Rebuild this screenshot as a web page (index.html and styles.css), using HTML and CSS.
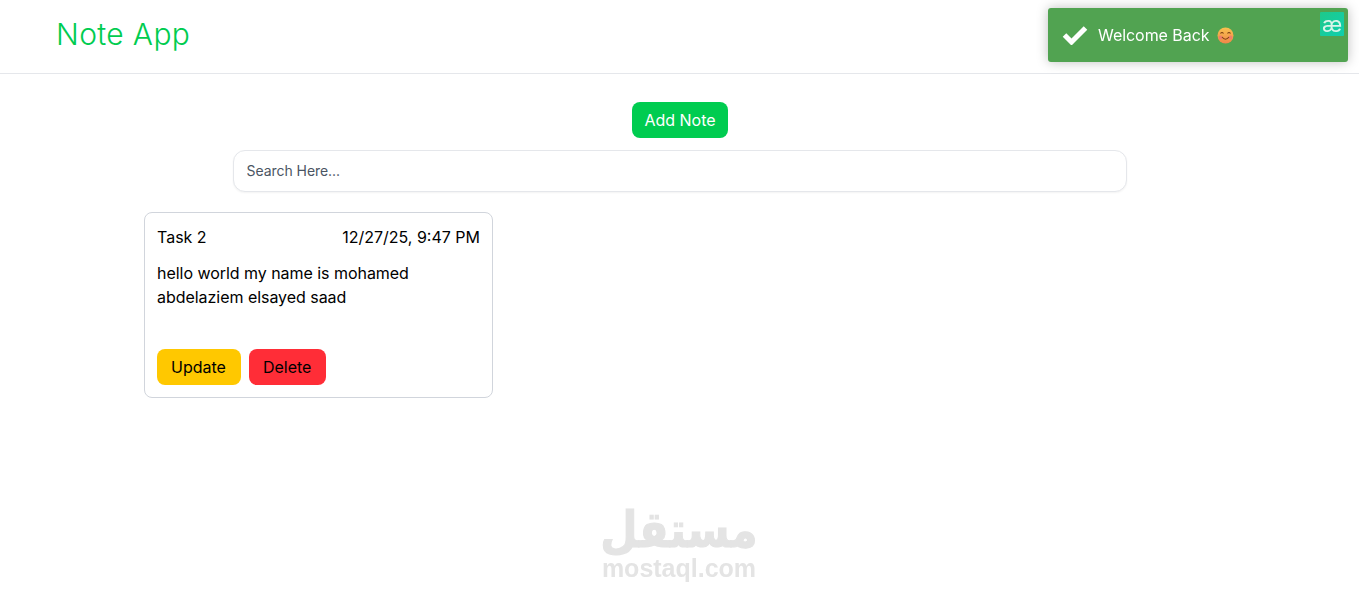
FILE: index.html
```html
<!DOCTYPE html>
<html>
  <head>
    <title>Note App</title>
    <meta name="viewport" content="width=device-width, initial-scale=1">
    <link rel="stylesheet" href="styles.css">
  </head>
  <body>
    <header class="navbar">
      <a class="brand">Note App</a>
    </header>

    <main class="page">
      <div class="add-row">
        <button class="btn btn-add">Add Note</button>
      </div>
      <div class="search-row">
        <input class="search" type="text" placeholder="Search Here...">
      </div>

      <div class="notes">
        <div class="note">
          <div class="note-head">
            <span>Task 2</span>
            <span>12/27/25, 9:47 PM</span>
          </div>
          <p class="note-body">hello world my name is mohamed abdelaziem elsayed saad</p>
          <div class="note-actions">
            <button class="btn btn-update">Update</button>
            <button class="btn btn-delete">Delete</button>
          </div>
        </div>
      </div>
    </main>

    <!-- Toast -->
    <div class="toast">
      <svg class="toast-check" width="26" height="20" viewBox="0 0 26 20">
        <path d="M2.5 10 L9.5 17 L23.5 3" fill="none" stroke="#fff" stroke-width="5"/>
      </svg>
      <span class="toast-text">Welcome Back</span>
      <svg class="toast-emoji" width="17" height="17" viewBox="0 0 17 17">
        <defs>
          <linearGradient id="emoji-face" x1="0" y1="0" x2="0" y2="1">
            <stop offset="0" stop-color="#f8c24e"/>
            <stop offset="1" stop-color="#f0864a"/>
          </linearGradient>
        </defs>
        <circle cx="8.5" cy="8.5" r="8" fill="url(#emoji-face)"/>
        <circle cx="3.6" cy="10.5" r="2" fill="#ef7f6a"/>
        <circle cx="13.4" cy="10.5" r="2" fill="#ef7f6a"/>
        <path d="M3.5 6.5 Q5 4.5 6.5 6.5 M10.5 6.5 Q12 4.5 13.5 6.5" fill="none" stroke="#7a3f12" stroke-width="1.1"/>
        <path d="M5 10 Q8.5 14.5 12 10" fill="none" stroke="#7a3f12" stroke-width="1.1"/>
      </svg>
      <span class="toast-badge">æ</span>
    </div>

    <!-- Watermark -->
    <div class="watermark">
      <span class="watermark-ar">مستقل</span>
      <span class="watermark-en">mostaql.com</span>
    </div>
  </body>
</html>
```

FILE: styles.css
```css
* {
  box-sizing: border-box;
}
body {
  margin: 0;
  font-family: "Inter", "Liberation Sans", sans-serif;
  background: #fff;
  color: #000;
  height: 593px;
  overflow: hidden;
}
.navbar {
  height: 74px;
  padding-left: 56px;
  padding-bottom: 6px;
  display: flex;
  align-items: center;
  border-bottom: 1px solid #e5e7eb;
}
.brand {
  font-size: 30px;
  font-weight: 300;
  letter-spacing: 0.35px;
  color: #00cc50;
}
.page {
  padding-top: 28px;
}
.add-row {
  display: flex;
  justify-content: center;
}
.btn {
  height: 36px;
  border: none;
  border-radius: 8px;
  padding: 0 15px 0 14px;
  font-family: inherit;
  font-size: 16px;
  line-height: 24px;
}
.btn-add {
  margin-left: 1px;
  padding: 0 12.5px;
  background: #00cc50;
  color: #fff;
}
.search-row {
  display: flex;
  justify-content: center;
  margin-top: 12px;
}
.search {
  width: 894px;
  height: 42px;
  padding: 0 13px 2px;
  border: 1px solid #e5e7eb;
  border-radius: 12px;
  box-shadow: 0 1px 2px rgba(0, 0, 0, 0.05);
  font-family: inherit;
  font-size: 14px;
  letter-spacing: -0.05px;
  outline: none;
}
.search::placeholder {
  color: #4b5563;
  opacity: 1;
}
.notes {
  display: grid;
  grid-template-columns: 349px;
  margin-top: 20px;
  padding-left: 144px;
}
.note {
  height: 186px;
  padding: 12px;
  border: 1px solid #d1d5dc;
  border-radius: 8px;
  display: flex;
  flex-direction: column;
}
.note-head {
  display: flex;
  justify-content: space-between;
  font-size: 16px;
  line-height: 24px;
}
.note-body {
  margin: 12px 0 0;
  font-size: 16px;
  line-height: 24px;
  letter-spacing: -0.04px;
}
.note-actions {
  margin-top: auto;
  display: flex;
  gap: 8px;
}
.btn-update {
  background: #ffc800;
  color: #000;
}
.btn-delete {
  background: #ff2d37;
  color: #000;
}

/* Toast, sits over the navbar */
.toast {
  position: fixed;
  top: 8px;
  right: 11px;
  width: 300px;
  height: 54px;
  padding-left: 14px;
  display: flex;
  align-items: center;
  background: #51a351;
  border-radius: 3px;
  box-shadow: 0 0 12px rgba(0, 0, 0, 0.25);
  color: #fff;
}
.toast-check {
  margin-right: 10px;
}
.toast-text {
  font-size: 16px;
  letter-spacing: -0.05px;
}
.toast-emoji {
  margin-left: 7px;
}
.toast-badge {
  position: absolute;
  top: 4px;
  right: 4px;
  width: 24px;
  height: 24px;
  display: flex;
  align-items: center;
  justify-content: center;
  background: linear-gradient(135deg, #1ec98a, #0fcfae);
  border-radius: 1px;
  font-size: 22px;
  line-height: 1;
  color: #d8f5ea;
}

/* Watermark, bottom middle of the page */
.watermark {
  position: fixed;
  left: 579px;
  top: 510px;
  width: 200px;
  display: flex;
  flex-direction: column;
  align-items: center;
  gap: 6px;
  color: #e4e4e4;
  font-family: "DejaVu Sans", "Liberation Sans", sans-serif;
  font-weight: 700;
}
.watermark-ar {
  font-size: 43px;
  line-height: 40px;
  transform: scaleY(1.15);
  -webkit-text-stroke: 1px #e4e4e4;
}
.watermark-en {
  font-family: "Liberation Sans", sans-serif;
  font-size: 25px;
  line-height: 24px;
}
```
